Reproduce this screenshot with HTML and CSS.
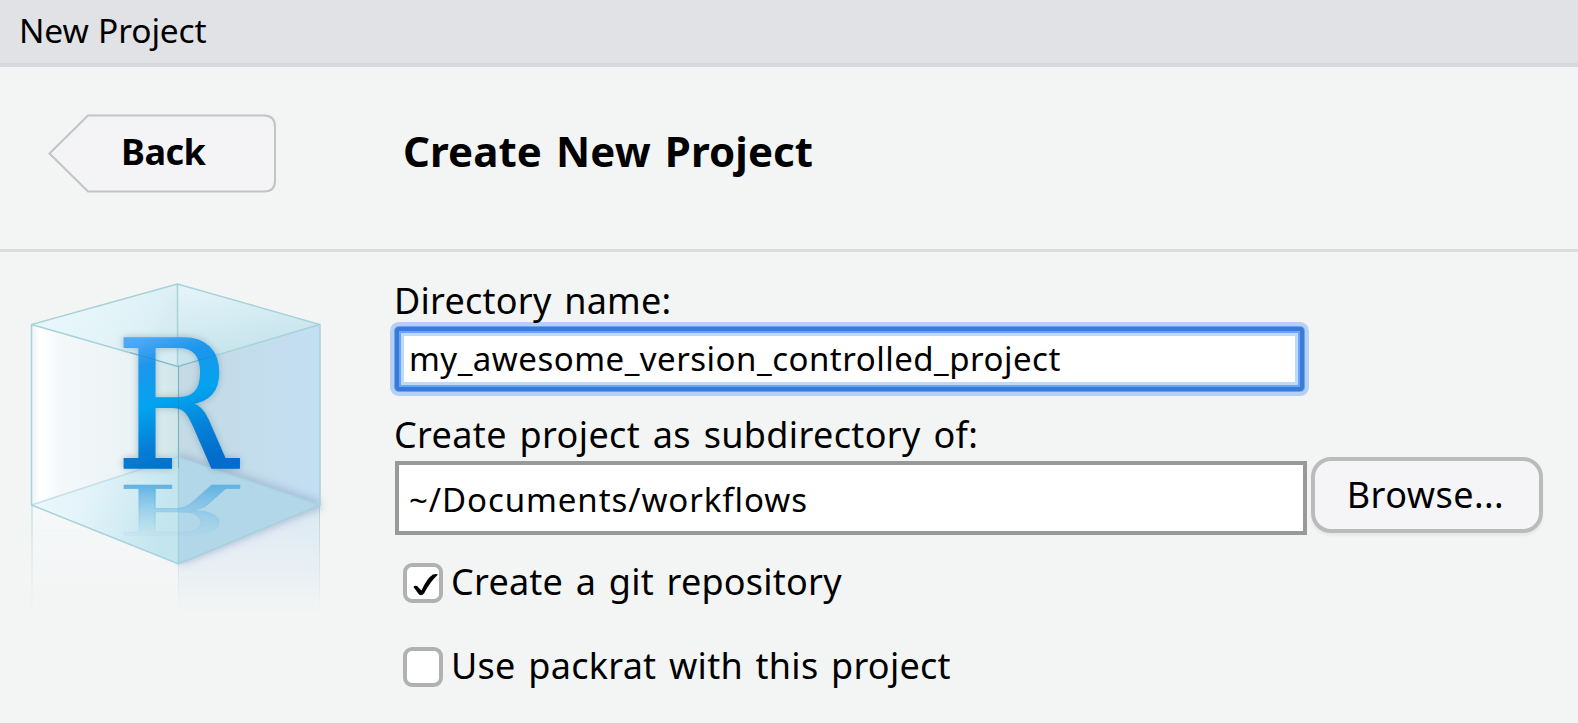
FILE: index.html
```
<!DOCTYPE html>
<html lang="en">
<head>
<meta charset="utf-8">
<title>New Project</title>
<link rel="stylesheet" href="styles.css">
</head>
<body>
<div class="dialog">
  <header class="caption">New Project</header>
  <section class="banner">
    <button class="back" type="button">
      <svg class="back-shape" width="230" height="82" viewBox="0 0 230 82"><path d="M41 3.500H217Q228 3.500 228 14.500V69Q228 79.500 217 79.500H41L2.500 41.500Z"/></svg>
      <span class="back-text">Back</span>
    </button>
    <h1 class="title">Create New Project</h1>
  </section>
  <main class="content">
    <svg class="cube" width="350" height="380" viewBox="0 252 350 380">
      <defs>
        <linearGradient id="left" x1="0" x2="1" y1="0" y2="0"><stop offset="0" stop-color="#edf3f8"/><stop offset=".06" stop-color="#ffffff"/><stop offset=".2" stop-color="#f4f8fa"/><stop offset=".65" stop-color="#ebf3f5"/><stop offset="1" stop-color="#cfe6e9"/></linearGradient>
        <linearGradient id="right" x1="0" x2="1" y1="0" y2="0"><stop offset="0" stop-color="#c4dae4"/><stop offset="1" stop-color="#c3dff3"/></linearGradient>
        <linearGradient id="top" x1="0" x2="1" y1="0" y2=".35"><stop offset="0" stop-color="#ebf8fc"/><stop offset=".7" stop-color="#e2f3f8"/><stop offset="1" stop-color="#d6ecf2"/></linearGradient>
        <linearGradient id="topr" x1=".3" x2=".6" y1="0" y2="1"><stop offset="0" stop-color="#e3f3f9"/><stop offset="1" stop-color="#bfe0e8"/></linearGradient>
        <linearGradient id="floor" x1="0" x2="1" y1="0" y2=".2"><stop offset="0" stop-color="#edf8fd"/><stop offset=".4" stop-color="#e4f4fa"/><stop offset="1" stop-color="#c3e5ed"/></linearGradient>
        <linearGradient id="fade" x1="0" x2="0" y1="505" y2="612" gradientUnits="userSpaceOnUse"><stop offset="0" stop-color="#fff"/><stop offset="1" stop-color="#000"/></linearGradient>
        <mask id="fadeMask"><rect x="0" y="500" width="350" height="130" fill="url(#fade)"/></mask>
        <linearGradient id="ink" x1="30" x2="70" y1="-131" y2="0" gradientUnits="userSpaceOnUse"><stop offset="0" stop-color="#4fa9f4"/><stop offset=".2" stop-color="#1d96ec"/><stop offset=".5" stop-color="#02a3ef"/><stop offset=".78" stop-color="#0580d6"/><stop offset="1" stop-color="#026dcc"/></linearGradient>
        <linearGradient id="inkFade" x1="0" x2="0" y1="0" y2="-131" gradientUnits="userSpaceOnUse"><stop offset="0" stop-color="#5fb2e3"/><stop offset="1" stop-color="#8fc9e6" stop-opacity=".1"/></linearGradient>
        <filter id="soft" x="-20%" y="-20%" width="140%" height="140%"><feGaussianBlur stdDeviation="4"/></filter>
      </defs>
      <g mask="url(#fadeMask)">
        <path d="M31.500 505L178.500 564V630H31.500Z" fill="#f5f7f9"/>
        <path d="M178.500 564L320 505V630H178.500Z" fill="#dae8f3"/>
        <path d="M32 505V620M178.500 564V620M319.500 505V620" stroke="#b5d3dc" fill="none"/>
      </g>
      <path d="M180 564L322 506L310 503L180 556Z" fill="#8894c4" opacity=".7" filter="url(#soft)"/>
      <path d="M31.500 324.500L178 366.500V457L31.500 505Z" fill="url(#left)"/>
      <path d="M178 366.500L320 324.500V505L178 457Z" fill="url(#right)"/>
      <path d="M178 457L320 505" stroke="#6680b0" stroke-width="5" opacity=".6" filter="url(#soft)"/>
      <path d="M177.500 284L31.500 324.500L178 366.500Z" fill="url(#top)"/>
      <path d="M177.500 284L320 324.500L178 366.500Z" fill="url(#topr)"/>
      <path d="M178 457L31.500 505L178.500 564Z" fill="url(#floor)"/>
      <path d="M178 457L320 505L178.500 564Z" fill="#b1d7e9"/>
      <g fill="none" stroke="#a6d2d8" stroke-width="1.500">
        <path d="M177.500 284L31.500 324.500V505L178.500 564L320 505V324.500ZM31.500 324.500L178 366.500L320 324.500M178.500 366.500V564M177.500 284V366"/>
        <path d="M31.500 505L178 457L320 505" opacity=".6"/>
      </g>
      <text class="letter shaded" transform="translate(115.500 467.500) scale(.885 .985)" fill="url(#ink)" stroke="url(#ink)">R</text>
      <text class="letter" transform="translate(115.500 485) scale(.885 -.38)" fill="url(#inkFade)" stroke="url(#inkFade)">R</text>
      <path d="M130 352.500L178 366.500L216 355M178.500 366.500V468" stroke="#1a6f9e" opacity=".3" fill="none"/>
    </svg>
    <form class="form">
      <div class="label dir-label">Directory name:</div>
      <div class="field focused">my_awesome_version_controlled_project</div>
      <div class="label parent-label">Create project as subdirectory of:</div>
      <div class="row">
        <div class="field parent">~/Documents/workflows</div>
        <button class="browse" type="button">Browse...</button>
      </div>
      <div class="option"><span class="box"><svg width="32" height="32" viewBox="0 0 32 32"><path d="M6.500 20Q7.500 18 10 19L14.500 23.500Q20 11 26 7.500Q29 6.500 31 7.500Q23 15 17 26.500Q14.500 29.500 12 27.500Z"/></svg></span><span class="git">Create a git repository</span></div>
      <div class="option"><span class="box"></span><span class="packrat">Use packrat with this project</span></div>
    </form>
  </main>
</div>
</body>
</html>
```
FILE: styles.css
```
* { box-sizing: border-box; }
body { margin: 0; background: #f3f5f4; color: #000; font-family: "Noto Sans", sans-serif; overflow: hidden; }
.dialog { width: 1578px; height: 723px; overflow: hidden; background: #f3f5f4; }
.caption { height: 67px; padding: 0 19px; background: #e1e2e6; border-bottom: 4px solid #d8d9dc; font-size: 33.500px; line-height: 61px; letter-spacing: -.15px; word-spacing: 1px; }
.banner { height: 185px; display: flex; border-bottom: 3px solid #dadcdc; padding: 45px 0 0 47px; }
.back { position: relative; width: 230px; height: 82px; padding: 0 0 3px; border: 0; background: none; color: inherit; font: bold 36px/79px "Noto Sans", sans-serif; letter-spacing: -.5px; text-align: left; }
.back-shape { position: absolute; left: 0; top: 0; }
.back-shape path { fill: #f4f4f7; stroke: #c2c3c4; stroke-width: 2; }
.back-text { position: relative; padding-left: 74px; }
.title { margin: 0 0 0 126px; font-size: 42px; font-weight: 700; line-height: 77px; letter-spacing: .1px; word-spacing: 3px; }
.content { display: flex; }
.cube { flex: none; width: 350px; height: 380px; }
.letter { font: 180px "DejaVu Serif", serif; stroke-width: 1.500px; }
.shaded { filter: drop-shadow(0 0 4px rgba(60, 110, 140, .4)); }
.form { padding: 22px 0 0 45px; width: 1228px; }
.label { height: 53px; line-height: 53px; font-size: 36px; margin-left: -1px; }
.dir-label { letter-spacing: .25px; word-spacing: 3px; }
.parent-label { margin-top: 17px; letter-spacing: .36px; word-spacing: 3px; }
.field { width: 909px; height: 64px; background: #fff; font-size: 33px; padding-left: 10px; }
.focused { border: 4px solid #3a7bd5; border-radius: 4px; line-height: 55px; letter-spacing: .5px; box-shadow: 0 0 0 1px #69a3ef, 0 0 0 5px #b5d0f3, inset 0 0 0 2px #69a5f8, inset 0 0 0 5px #bfd9fb; }
.row { display: flex; }
.parent { width: 912px; height: 74px; border: 4px solid #999; line-height: 69px; letter-spacing: .93px; }
.browse { margin: -4px 0 0 4px; width: 232px; height: 76px; padding: 0 3px 0 0; border: 4px solid #bbb; border-radius: 20px; background: #f5f5f8; box-shadow: 0 3px 2px #e8e9e9; color: inherit; font: 36px/62px "Noto Sans", sans-serif; letter-spacing: .45px; }
.option { display: flex; align-items: center; gap: 8px; margin: 28px 0 44px 8px; height: 40px; font-size: 36px; line-height: 38px; white-space: nowrap; }
.option span:last-child { margin-top: -2px; }
.option + .option { margin-top: 0; }
.option .box, .option .box:last-child { margin: 0; width: 40px; height: 40px; border: 4px solid #b1b1b1; border-radius: 9px; background: #fff; }
.box svg { display: block; }
.git { letter-spacing: .24px; word-spacing: 3px; }
.packrat { letter-spacing: .27px; word-spacing: 3px; }
```
